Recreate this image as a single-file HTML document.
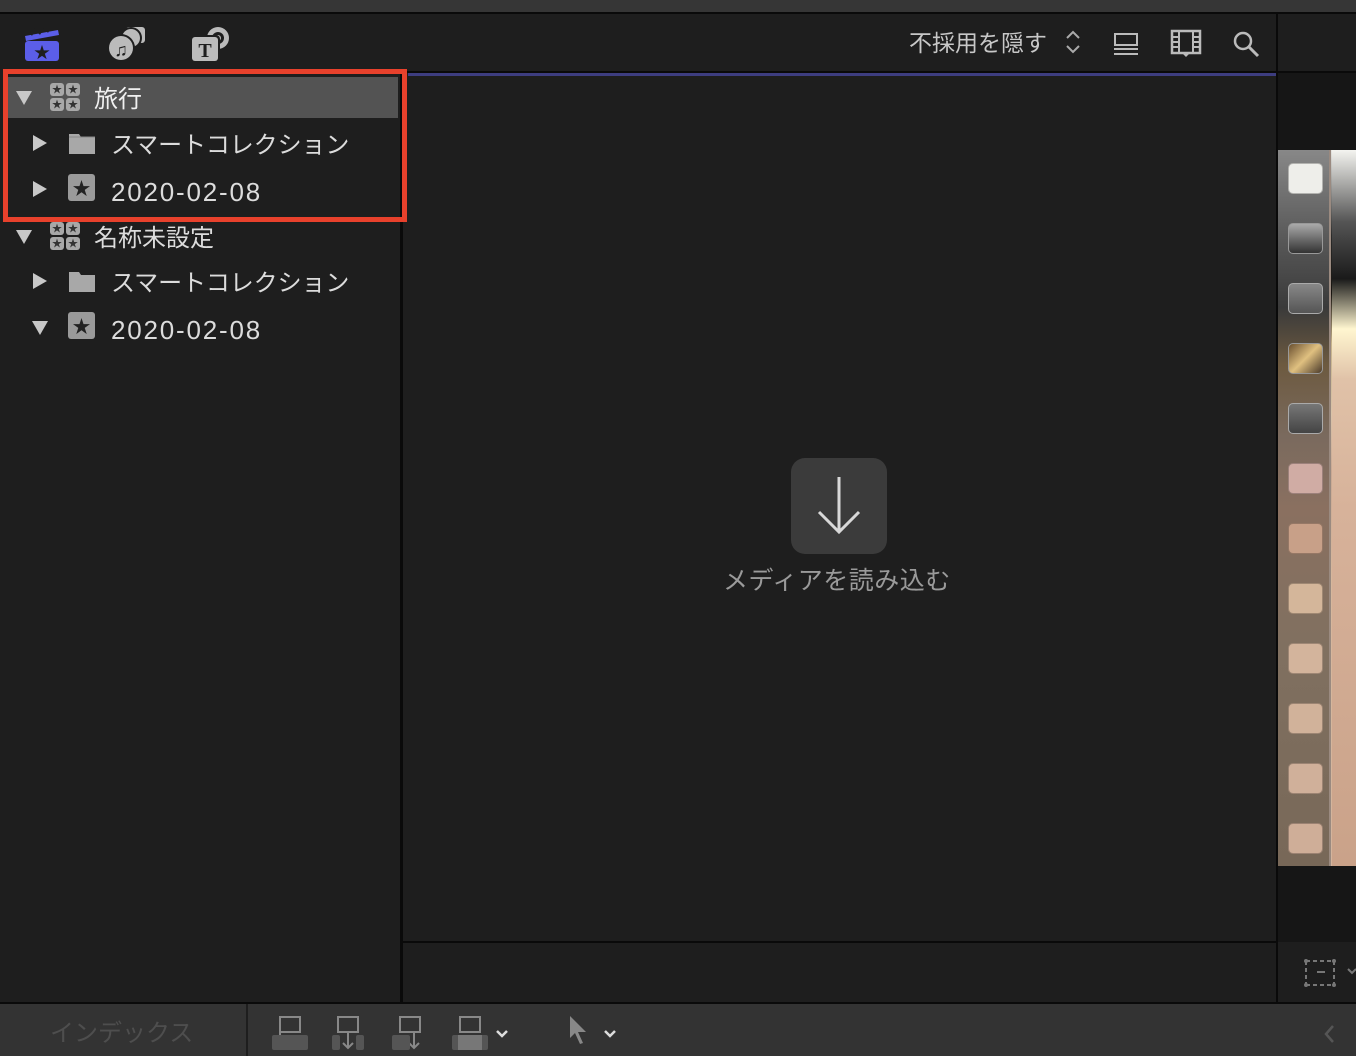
<!DOCTYPE html>
<html><head><meta charset="utf-8"><style>
*{margin:0;padding:0;box-sizing:border-box}
body{width:1356px;height:1056px;background:#1e1e1e;position:relative;overflow:hidden;font-family:"Liberation Sans","Noto Sans CJK JP",sans-serif;color:#dcdcdc}
.a{position:absolute}
.t{position:absolute;font-size:24px;line-height:30px;white-space:nowrap}
.tri{position:absolute;width:0;height:0}
.r{border-top:8px solid transparent;border-bottom:8px solid transparent;border-left:14px solid #c8c8c8}
.d{border-left:8px solid transparent;border-right:8px solid transparent;border-top:14px solid #c8c8c8}
.sq{position:absolute;left:1288px;width:35px;height:31px;border-radius:5px;border:1.5px solid rgba(0,0,0,.25)}
</style></head><body>
<div class="a" style="left:0;top:0;width:1356px;height:12px;background:#363636"></div>
<div class="a" style="left:0;top:12px;width:1356px;height:2px;background:#0a0a0a"></div>
<svg class="a" style="left:22px;top:26px" width="40" height="38" viewBox="0 0 40 38">
<path d="M3 10 L36 4 L37 9 L4 15Z" fill="#5b5ee8"/><path d="M9 9l4-6M17 8l4-6M25 6l4-6" stroke="#1e1e1e" stroke-width="2.5"/>
<rect x="3" y="15" width="34" height="20" rx="3" fill="#5b5ee8"/>
<text x="20" y="32" font-size="16" text-anchor="middle" fill="#1e1e1e">★</text></svg>
<svg class="a" style="left:106px;top:24px" width="42" height="40" viewBox="0 0 42 40">
<rect x="20" y="3" width="19" height="16" rx="3" fill="#bbb"/><circle cx="25" cy="14" r="11" fill="#1e1e1e"/><circle cx="25" cy="14" r="9" fill="#bbb"/>
<circle cx="15" cy="24" r="14" fill="#1e1e1e"/><circle cx="15" cy="24" r="12" fill="#bbb"/>
<text x="15" y="32" font-size="18" text-anchor="middle" fill="#1e1e1e">♫</text></svg>
<svg class="a" style="left:190px;top:24px" width="42" height="40" viewBox="0 0 42 40">
<circle cx="28" cy="14" r="11" fill="#bbb"/><circle cx="28" cy="14" r="6" fill="#1e1e1e"/><circle cx="28" cy="14" r="3" fill="#bbb"/>
<rect x="0" y="11" width="30" height="28" rx="4" fill="#1e1e1e"/><rect x="2" y="13" width="26" height="24" rx="3" fill="#bbb"/>
<text x="15" y="33" font-size="20" font-weight="bold" font-family="Liberation Serif" text-anchor="middle" fill="#1e1e1e">T</text></svg>
<div class="t" style="left:909px;top:28px;font-size:23px;color:#c8c8c8">不採用を隠す</div>
<svg class="a" style="left:1063px;top:28px" width="20" height="28"><path d="M4 10l6-6 6 6M4 18l6 6 6-6" stroke="#aaa" stroke-width="2" fill="none"/></svg>
<svg class="a" style="left:1112px;top:30px" width="28" height="28"><rect x="3" y="4" width="22" height="11" fill="none" stroke="#bbb" stroke-width="2"/><path d="M2 19h24M2 24h24" stroke="#bbb" stroke-width="2"/></svg>
<svg class="a" style="left:1170px;top:29px" width="32" height="30"><rect x="2" y="2" width="28" height="22" fill="none" stroke="#bbb" stroke-width="2.5"/><path d="M9 2v22M23 2v22M2 8h7M2 13h7M2 18h7M23 8h7M23 13h7M23 18h7" stroke="#bbb" stroke-width="2"/><path d="M12 24h8l-4 4z" fill="#bbb"/></svg>
<svg class="a" style="left:1232px;top:30px" width="30" height="30"><circle cx="11" cy="11" r="8" fill="none" stroke="#bbb" stroke-width="2.5"/><path d="M17 17l9 9" stroke="#bbb" stroke-width="3"/></svg>
<div class="a" style="left:1276px;top:12px;width:2px;height:992px;background:#0a0a0a"></div>
<div class="a" style="left:402px;top:71px;width:954px;height:2px;background:#0a0a0a"></div>
<div class="a" style="left:408px;top:73px;width:868px;height:3px;background:#3d3d80"></div>
<div class="a" style="left:1278px;top:73px;width:78px;height:77px;background:#161616"></div>
<div class="a" style="left:1278px;top:866px;width:78px;height:76px;background:#161616"></div>
<div class="a" style="left:400px;top:73px;width:3px;height:931px;background:#0a0a0a"></div>
<div class="a" style="left:8px;top:77px;width:390px;height:41px;background:#535353"></div>
<div class="a" style="left:3px;top:69px;width:404px;height:153px;border:5px solid #e8412c"></div>
<div class="tri d" style="left:16px;top:91px"></div>
<svg class="a" style="left:50px;top:83px" width="30" height="30"><g fill="#a8a8a8"><rect x="0" y="0" width="14" height="13" rx="3"/><rect x="16" y="0" width="14" height="13" rx="3"/><rect x="0" y="15" width="14" height="13" rx="3"/><rect x="16" y="15" width="14" height="13" rx="3"/></g><g font-size="10" fill="#333" text-anchor="middle"><text x="7" y="10">★</text><text x="23" y="10">★</text><text x="7" y="25">★</text><text x="23" y="25">★</text></g></svg>
<div class="t" style="left:94px;top:85px;color:#f0f0f0">旅行</div>
<div class="tri r" style="left:33px;top:135px"></div>
<svg class="a" style="left:68px;top:131px" width="28" height="24"><path d="M1 3h10l2 3h14v17H1z" fill="#a8a8a8"/><path d="M1 6h26" stroke="#888" stroke-width="1"/></svg>
<div class="t" style="left:111px;top:131px;letter-spacing:-0.1px">スマートコレクション</div>
<div class="tri r" style="left:33px;top:181px"></div>
<svg class="a" style="left:68px;top:174px" width="28" height="28"><rect width="27" height="27" rx="3" fill="#9a9a9a"/><text x="13.5" y="21" font-size="18" text-anchor="middle" fill="#222">★</text></svg>
<div class="t" style="left:111px;top:177px;font-size:26px;letter-spacing:1.8px">2020-02-08</div>
<div class="tri d" style="left:16px;top:230px"></div>
<svg class="a" style="left:50px;top:222px" width="30" height="30"><g fill="#a8a8a8"><rect x="0" y="0" width="14" height="13" rx="3"/><rect x="16" y="0" width="14" height="13" rx="3"/><rect x="0" y="15" width="14" height="13" rx="3"/><rect x="16" y="15" width="14" height="13" rx="3"/></g><g font-size="10" fill="#333" text-anchor="middle"><text x="7" y="10">★</text><text x="23" y="10">★</text><text x="7" y="25">★</text><text x="23" y="25">★</text></g></svg>
<div class="t" style="left:94px;top:224px">名称未設定</div>
<div class="tri r" style="left:33px;top:273px"></div>
<svg class="a" style="left:68px;top:269px" width="28" height="24"><path d="M1 3h10l2 3h14v17H1z" fill="#a8a8a8"/></svg>
<div class="t" style="left:111px;top:269px;letter-spacing:-0.1px">スマートコレクション</div>
<div class="tri d" style="left:32px;top:321px"></div>
<svg class="a" style="left:68px;top:312px" width="28" height="28"><rect width="27" height="27" rx="3" fill="#9a9a9a"/><text x="13.5" y="21" font-size="18" text-anchor="middle" fill="#222">★</text></svg>
<div class="t" style="left:111px;top:315px;font-size:26px;letter-spacing:1.8px">2020-02-08</div>
<div class="a" style="left:791px;top:458px;width:96px;height:96px;border-radius:14px;background:#3b3b3b"></div>
<svg class="a" style="left:791px;top:458px" width="96" height="96"><path d="M48 19v55M28 54l20 20 20-20" stroke="#d8d8d8" stroke-width="3" fill="none"/></svg>
<div class="t" style="left:723px;top:566px;color:#9a9a9a;font-size:25px;letter-spacing:0.5px">メディアを読み込む</div>
<div class="a" style="left:402px;top:941px;width:874px;height:2px;background:#0a0a0a"></div>
<div class="a" style="left:1278px;top:150px;width:78px;height:716px;background:linear-gradient(180deg,#e8e8e4 0%,#2a2a2a 12%,#181410 20%,#c8b48a 27%,#d8c2a8 37%,#c9a892 45%,#d6b79c 60%,#d4b49c 100%)"></div>
<div class="a" style="left:1332px;top:150px;width:24px;height:716px;background:linear-gradient(180deg,#f4f4f0 0%,#555 10%,#1a1a1a 18%,#fff6d0 25%,#e0c2a8 32%,#d7b29a 50%,#caa289 100%)"></div>
<div class="a" style="left:1278px;top:150px;width:53px;height:716px;background:linear-gradient(180deg,#888 0%,#5a5a5a 12%,#3a3a3a 22%,#6d5a40 30%,#7a6a5e 40%,#8a7060 50%,#807060 70%,#786858 100%);border-right:2px solid #9a8a80"></div>
<div class="sq" style="top:163px;background:#eeeeea"></div>
<div class="sq" style="top:223px;background:linear-gradient(#aaa,#333);border-color:#999"></div>
<div class="sq" style="top:283px;background:linear-gradient(#888,#555);border-color:#aaa"></div>
<div class="sq" style="top:343px;background:linear-gradient(135deg,#6a5030,#e0c080,#4a3a2a);border-color:#999"></div>
<div class="sq" style="top:403px;background:linear-gradient(#777,#444);border-color:#aaa"></div>
<div class="sq" style="top:463px;background:#d0aca4"></div>
<div class="sq" style="top:523px;background:#c8a088"></div>
<div class="sq" style="top:583px;background:#d4b69a"></div>
<div class="sq" style="top:643px;background:#d3b49c"></div>
<div class="sq" style="top:703px;background:#d1b29a"></div>
<div class="sq" style="top:763px;background:#d0b09a"></div>
<div class="sq" style="top:823px;background:#cfae98"></div>
<svg class="a" style="left:1302px;top:956px" width="54" height="32"><g stroke="#777" stroke-width="2" fill="none"><path d="M4 5h28M4 29h28M4 5v24M32 5v24" stroke-dasharray="4 3"/><path d="M15 16h8"/></g><circle cx="4" cy="5" r="2" fill="#777"/><circle cx="32" cy="5" r="2" fill="#777"/><circle cx="4" cy="29" r="2" fill="#777"/><circle cx="32" cy="29" r="2" fill="#777"/><path d="M46 13l4 4 4-4" stroke="#777" stroke-width="2" fill="none"/></svg>
<div class="a" style="left:0;top:1002px;width:1356px;height:2px;background:#0a0a0a"></div>
<div class="a" style="left:0;top:1004px;width:1356px;height:52px;background:#333"></div>
<div class="a" style="left:246px;top:1004px;width:2px;height:52px;background:#1e1e1e"></div>
<div class="t" style="left:50px;top:1019px;color:#4e4e4e">インデックス</div>
<svg class="a" style="left:270px;top:1014px" width="240" height="40"><g stroke="#888" stroke-width="2" fill="none"><rect x="10" y="3" width="20" height="15"/><path d="M10 18v8"/><rect x="68" y="3" width="20" height="15"/><path d="M78 18v16M73 29l5 5 5-5"/><rect x="130" y="3" width="20" height="15"/><path d="M144 18v16M139 29l5 5 5-5"/><rect x="190" y="3" width="20" height="15"/></g>
<g fill="#555"><rect x="2" y="21" width="36" height="15" rx="2"/><rect x="62" y="21" width="8" height="15" rx="2"/><rect x="86" y="21" width="8" height="15" rx="2"/><rect x="122" y="21" width="18" height="15" rx="2"/><rect x="182" y="21" width="36" height="15" rx="2"/></g><rect x="188" y="21" width="24" height="15" fill="#777"/>
<path d="M227 17l5 5 5-5" stroke="#ddd" stroke-width="2.5" fill="none"/></svg>
<svg class="a" style="left:566px;top:1014px" width="60" height="36"><path d="M4 2l0 22 5-5 5 11 3-1-5-11 8 0z" fill="#888"/><path d="M39 17l5 5 5-5" stroke="#ddd" stroke-width="2.5" fill="none"/></svg>
<svg class="a" style="left:1320px;top:1022px" width="20" height="24"><path d="M13 4l-7 8 7 8" stroke="#555" stroke-width="2.5" fill="none"/></svg>
</body></html>
